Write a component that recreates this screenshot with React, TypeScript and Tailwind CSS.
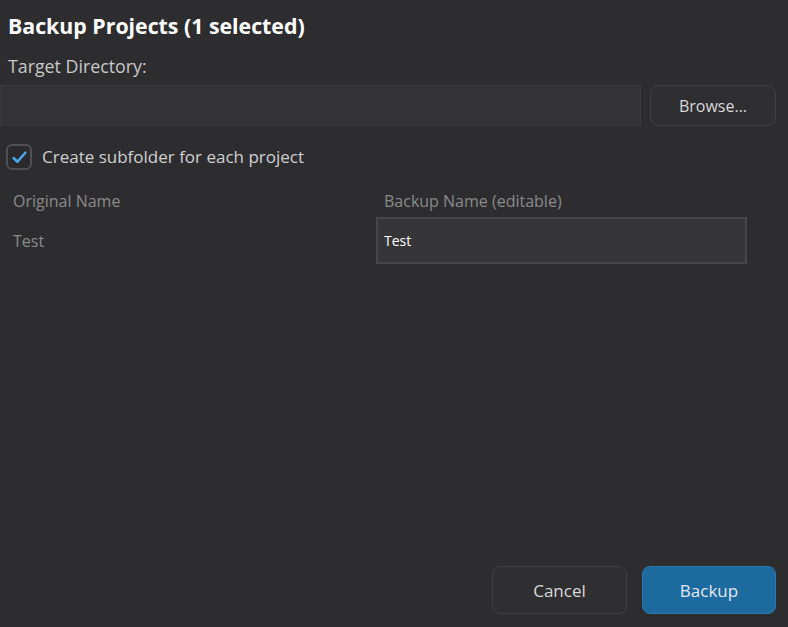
import { useState } from "react";

export default function App() {
  const [subfolder, setSubfolder] = useState(true);
  const [backupName, setBackupName] = useState("Test");

  return (
    <div
      className="w-[788px] h-[627px] flex flex-col bg-[#2d2d30] text-[#d4d4d4] overflow-hidden"
      style={{ fontFamily: '"Open Sans", "Noto Sans", sans-serif' }}
    >
      {/* Title */}
      <h1 className="pl-[8px] pt-[10px] text-[21.3px] leading-[32px] font-bold text-white">
        Backup Projects (1 selected)
      </h1>

      {/* Target directory */}
      <label className="pl-[8px] mt-[13px] text-[17.8px] leading-[23px] text-[#c8c8c8]">
        Target Directory:
      </label>
      <div className="mt-[7px] flex items-stretch gap-[9px] pr-[12px] h-[41px]">
        <input
          className="flex-1 bg-[#333335] border border-[#3a3a3c] outline-none px-2 text-[15px] text-white"
          type="text"
        />
        <button className="w-[126px] rounded-[8px] border border-[#404043] bg-[#2f2f32] text-[16px] text-[#d8d8d8]">
          Browse...
        </button>
      </div>

      {/* Subfolder checkbox */}
      <label className="mt-[18px] ml-[6px] flex items-center gap-[10px] cursor-pointer select-none">
        <span
          className="w-[26px] h-[26px] rounded-[6px] border-2 border-[#505054] bg-[#2b2b2e] flex items-center justify-center"
          onClick={() => setSubfolder(!subfolder)}
        >
          {subfolder && (
            <svg width="17" height="17" viewBox="0 0 16 16" fill="none">
              <path
                d="M2.5 8.5 L6 12 L13.5 3.5"
                stroke="#4aa8ec"
                strokeWidth="2.4"
                strokeLinecap="round"
                strokeLinejoin="round"
              />
            </svg>
          )}
        </span>
        <span className="text-[17px] text-[#d0d0d0]">Create subfolder for each project</span>
      </label>

      {/* Table */}
      <div className="mt-[20px] grid grid-cols-[376px_371px] text-[16px]">
        <div className="pl-[13px] leading-[22px] text-[#8a8a8a]">Original Name</div>
        <div className="pl-[8px] leading-[22px] text-[#8a8a8a]">Backup Name (editable)</div>
        <div className="pl-[13px] mt-[5px] h-[47px] flex items-center text-[#8a8a8a]">Test</div>
        <input
          className="mt-[5px] h-[47px] bg-[#363638] border-2 border-[#464649] outline-none px-[6px] text-[14px] text-white"
          value={backupName}
          onChange={(e) => setBackupName(e.target.value)}
        />
      </div>

      {/* Footer buttons */}
      <div className="mt-auto mb-[13px] pr-[12px] flex justify-end gap-[15px]">
        <button className="w-[135px] h-[48px] pt-[2px] rounded-[8px] border border-[#404043] bg-[#2f2f32] text-[17px] text-[#d8d8d8]">
          Cancel
        </button>
        <button className="w-[134px] h-[48px] pt-[2px] rounded-[8px] bg-[#1d6a9f] border border-[#2a78ad] text-[17px] text-[#e0e8f0]">
          Backup
        </button>
      </div>
    </div>
  );
}
